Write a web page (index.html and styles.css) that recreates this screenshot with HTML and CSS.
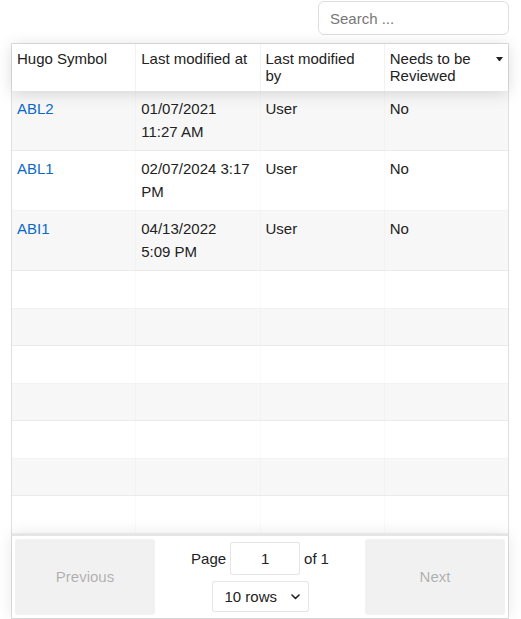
FILE: index.html
```html
<!DOCTYPE html>
<html lang="en">
<head>
<meta charset="utf-8">
<title>Hugo Symbols</title>
<link rel="stylesheet" href="styles.css">
</head>
<body>
<div class="page">
  <div class="toolbar">
    <input class="search" type="text" placeholder="Search ...">
  </div>
  <div class="rtable">
    <div class="thead">
      <div class="tr">
        <div class="th"><span class="th-label">Hugo Symbol</span><span class="sort"></span></div>
        <div class="th"><span class="th-label">Last modified at</span><span class="sort"></span></div>
        <div class="th"><span class="th-label">Last modified by</span><span class="sort"></span></div>
        <div class="th"><span class="th-label">Needs to be Reviewed</span><span class="sort desc"></span></div>
      </div>
    </div>
    <div class="tbody">
      <div class="tr odd">
        <div class="td"><a class="link" href="#">ABL2</a></div>
        <div class="td">01/07/2021 11:27 AM</div>
        <div class="td">User</div>
        <div class="td">No</div>
      </div>
      <div class="tr">
        <div class="td"><a class="link" href="#">ABL1</a></div>
        <div class="td">02/07/2024 3:17 PM</div>
        <div class="td">User</div>
        <div class="td">No</div>
      </div>
      <div class="tr odd">
        <div class="td"><a class="link" href="#">ABI1</a></div>
        <div class="td">04/13/2022 5:09&nbsp;PM</div>
        <div class="td">User</div>
        <div class="td">No</div>
      </div>
      <div class="tr pad"><div class="td">&nbsp;</div><div class="td">&nbsp;</div><div class="td">&nbsp;</div><div class="td">&nbsp;</div></div>
      <div class="tr pad odd"><div class="td">&nbsp;</div><div class="td">&nbsp;</div><div class="td">&nbsp;</div><div class="td">&nbsp;</div></div>
      <div class="tr pad"><div class="td">&nbsp;</div><div class="td">&nbsp;</div><div class="td">&nbsp;</div><div class="td">&nbsp;</div></div>
      <div class="tr pad odd"><div class="td">&nbsp;</div><div class="td">&nbsp;</div><div class="td">&nbsp;</div><div class="td">&nbsp;</div></div>
      <div class="tr pad"><div class="td">&nbsp;</div><div class="td">&nbsp;</div><div class="td">&nbsp;</div><div class="td">&nbsp;</div></div>
      <div class="tr pad odd"><div class="td">&nbsp;</div><div class="td">&nbsp;</div><div class="td">&nbsp;</div><div class="td">&nbsp;</div></div>
      <div class="tr pad"><div class="td">&nbsp;</div><div class="td">&nbsp;</div><div class="td">&nbsp;</div><div class="td">&nbsp;</div></div>
    </div>
    <div class="pagination">
      <div class="pg-side"><button class="btn" disabled>Previous</button></div>
      <div class="pg-center">
        <span class="page-info">Page <input class="page-jump" type="text" value="1"> of <span class="total">1</span></span>
        <span class="size-options">
          <span class="select-wrap">
            <select class="size-select"><option>10 rows</option><option>20 rows</option><option>50 rows</option></select>
            <svg class="chev" width="9" height="6" viewBox="0 0 9 6"><path d="M1 1 L4.5 4.5 L8 1" fill="none" stroke="#222" stroke-width="1.6" stroke-linecap="round" stroke-linejoin="round"/></svg>
          </span>
        </span>
      </div>
      <div class="pg-side"><button class="btn" disabled>Next</button></div>
    </div>
  </div>
</div>
</body>
</html>
```

FILE: styles.css
```css
* { box-sizing: border-box; }

html, body {
  margin: 0;
  padding: 0;
  background: #fff;
}

body {
  font-family: "Liberation Sans", Arial, sans-serif;
  font-size: 15px;
  color: #222;
}

.page {
  padding: 1px 12px 0 11px;
}

.toolbar {
  display: flex;
  justify-content: flex-end;
  margin-bottom: 8px;
}

.search {
  width: 191px;
  height: 34px;
  border: 1px solid #dedede;
  border-radius: 6px;
  padding: 0 11px;
  font-family: inherit;
  font-size: 15px;
  color: #222;
  outline: none;
  background: #fff;
}

.search::placeholder {
  color: #777;
}

.rtable {
  display: flex;
  flex-direction: column;
  border: 1px solid rgba(0, 0, 0, 0.12);
}

.tr {
  display: flex;
}

.thead {
  position: relative;
  z-index: 2;
  background: #fff;
  box-shadow: 0 2px 15px 0 rgba(0, 0, 0, 0.15);
}

.th {
  flex: 1 1 0;
  min-width: 0;
  display: flex;
  align-items: flex-start;
  padding: 6px 5px 7px 5px;
  line-height: 17px;
  border-right: 1px solid rgba(0, 0, 0, 0.05);
}

.th:last-child {
  border-right: 0;
}

.th-label {
  flex: 1 1 auto;
  min-width: 0;
}

.sort {
  flex: 0 0 7px;
  width: 7px;
  height: 4px;
  margin-top: 7px;
}

.sort.desc {
  border-left: 3.5px solid transparent;
  border-right: 3.5px solid transparent;
  border-top: 4px solid #222;
}

.tbody {
  display: flex;
  flex-direction: column;
}

.tbody .tr {
  border-bottom: 1px solid rgba(0, 0, 0, 0.05);
}

.tbody .tr.odd {
  background: rgba(0, 0, 0, 0.03);
}

.td {
  flex: 1 1 0;
  min-width: 0;
  padding: 7px 5px;
  line-height: 22.5px;
  border-right: 1px solid rgba(0, 0, 0, 0.02);
}

.td:last-child {
  border-right: 0;
}

.link {
  color: #0b6ac6;
  text-decoration: none;
}

.pagination {
  position: relative;
  z-index: 2;
  display: flex;
  align-items: stretch;
  padding: 3px;
  border-top: 2px solid rgba(0, 0, 0, 0.1);
  box-shadow: 0 0 15px 0 rgba(0, 0, 0, 0.1);
  background: #fff;
}

.pg-side {
  flex: 1 1 0;
  display: flex;
}

.btn {
  flex: 1;
  border: 0;
  border-radius: 3px;
  background: rgba(0, 0, 0, 0.1);
  color: rgba(0, 0, 0, 0.6);
  font-family: inherit;
  font-size: 15px;
  opacity: 0.5;
  padding: 6px;
}

.pg-center {
  flex: 1.5 1 0;
  display: flex;
  flex-direction: column;
  align-items: center;
  justify-content: center;
}

.page-info {
  margin: 3px 10px;
  white-space: nowrap;
  display: flex;
  align-items: center;
  gap: 4px;
}

.page-jump {
  width: 70px;
  height: 33px;
  text-align: center;
  border: 1px solid rgba(0, 0, 0, 0.1);
  border-radius: 3px;
  padding: 5px 7px;
  font-family: inherit;
  font-size: 15px;
  color: #222;
  background: #fff;
  outline: none;
}

.size-options {
  margin: 3px 10px;
}

.select-wrap {
  position: relative;
  display: inline-block;
}

.size-select {
  appearance: none;
  -webkit-appearance: none;
  width: 97px;
  height: 31px;
  border: 1px solid rgba(0, 0, 0, 0.1);
  border-radius: 3px;
  padding: 0 7px 0 12px;
  font-family: inherit;
  font-size: 15px;
  color: #222;
  background: #fff;
  outline: none;
  display: block;
}

.chev {
  position: absolute;
  right: 9px;
  top: 13px;
  pointer-events: none;
}
```
